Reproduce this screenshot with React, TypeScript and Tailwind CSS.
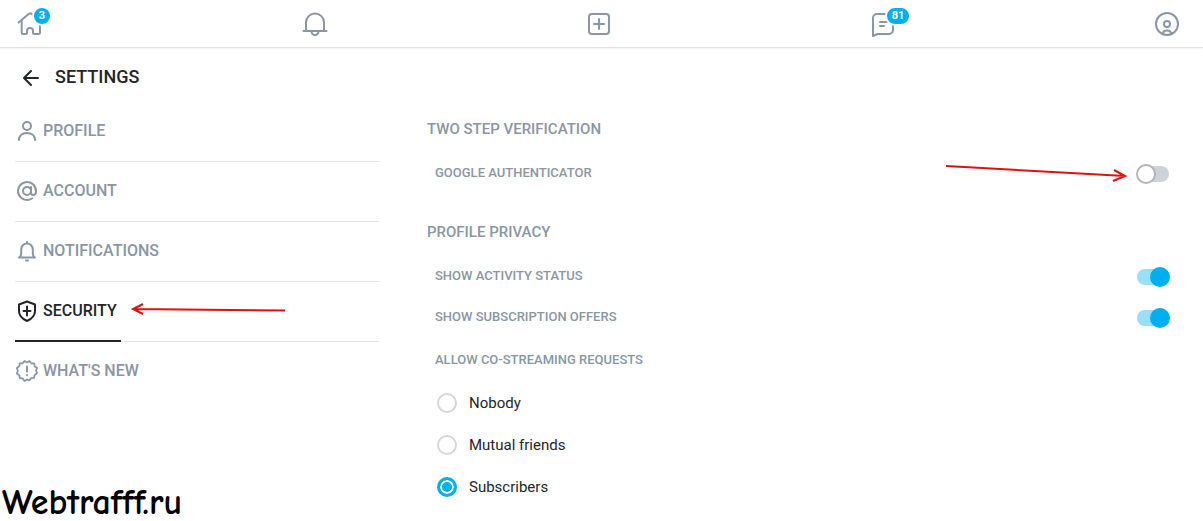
import { useState } from 'react';
import type { ReactNode } from 'react';

type IconProps = { children: ReactNode; size?: string };

function Icon({ children, size = 'size-6' }: IconProps) {
  const box = size === 'size-7' ? '0 0 28 28' : '0 0 24 24';
  return (
    <svg viewBox={box} className={`${size} shrink-0`} fill="none" stroke="currentColor" strokeWidth="2" strokeLinecap="round" strokeLinejoin="round" aria-hidden="true">
      {children}
    </svg>
  );
}

const menu = [
  {
    id: 'profile',
    label: 'PROFILE',
    icon: (
      <>
        <circle cx="12" cy="7" r="4" />
        <path d="M4 21c0-4.500 3.500-7 8-7s8 2.500 8 7" />
      </>
    ),
  },
  {
    id: 'account',
    label: 'ACCOUNT',
    icon: (
      <>
        <circle cx="12" cy="12" r="4" />
        <path d="M16 8v5.500a2.500 2.500 0 0 0 5 0V12a9 9 0 1 0-4 7.500" />
      </>
    ),
  },
  {
    id: 'notifications',
    label: 'NOTIFICATIONS',
    icon: (
      <>
        <path d="M4 18.500h16M5 18c1-1.200 1.200-2.500 1.200-4v-3.500a5.800 6 0 0 1 11.600 0V14c0 1.500.2 2.800 1.200 4M12 3v.5" />
        <path d="M11 21.500h2" />
      </>
    ),
  },
  {
    id: 'security',
    label: 'SECURITY',
    icon: (
      <>
        <path d="M12 2.500l8 3V12c0 5-3.500 8-8 10-4.500-2-8-5-8-10V5.500z" />
        <path d="M12 7.500v9M8.500 12h7" />
      </>
    ),
  },
  {
    id: 'whats-new',
    label: "WHAT'S NEW",
    icon: (
      <>
        <path strokeWidth="1.8" d="M12 3.500L14.500 2l1.700 2.300 2.900.1.500 2.800 2.400 1.600-.9 2.700.9 2.700-2.400 1.900-.5 2.800-2.900.2-1.900 2.200L12 20.500 9.500 22l-1.800-2.600-2.900-.2-.5-2.800-2.400-1.900.9-2.700-.9-2.900 2.400-1.700.5-2.800 2.900-.1L9.500 2z" />
        <path d="M12 7.500v5M12 16v.3" />
      </>
    ),
  },
];

const requestOptions = ['Nobody', 'Mutual friends', 'Subscribers'];

function TopBar() {
  return (
    <header className="flex h-12 items-center justify-between border-b border-[#dfe3e6] pr-[22px] pl-4 text-[#8a96a3] shadow-xs">
      <button type="button" aria-label="Home" className="relative">
        <Icon size="size-7">
          <path d="M2.500 12.500L13 3.800a2 2 0 0 1 2.500 0l9 8.700M5.700 11v11.500A1.500 1.500 0 0 0 7.200 24h2.300a1.500 1.500 0 0 0 1.500-1.500V21a3 3 0 0 1 6 0v1.500a1.500 1.500 0 0 0 1.500 1.500h4a1.500 1.500 0 0 0 1.500-1.500V12" />
        </Icon>
        <span className="absolute -top-1 left-4 flex h-5 min-w-5 items-center justify-center rounded-full border-2 border-white bg-[#00aff0] text-[11px] leading-4 font-bold text-white">3</span>
      </button>
      <button type="button" aria-label="Notifications">
        <Icon size="size-7">
          <path d="M3.500 21h23M6 21v-8.500a9 9 0 0 1 18 0V21" />
          <path d="M11.500 21.500a3.500 3.500 0 0 0 7 0" />
        </Icon>
      </button>
      <button type="button" aria-label="New post">
        <Icon size="size-7">
          <rect x="4" y="4" width="20" height="20" rx="3" />
          <path d="M14 9v10M9 14h10" />
        </Icon>
      </button>
      <button type="button" aria-label="Messages" className="relative">
        <Icon size="size-7">
          <path d="M4 26V8a4 4 0 0 1 4-4h16v16a4 4 0 0 1-4 4H8.500z" />
          <path d="M11 12h7M11 16h4" />
        </Icon>
        <span className="absolute -top-1 left-4 flex h-5 items-center justify-center rounded-full border-2 border-white bg-[#00aff0] px-[5px] text-[11px] leading-4 font-bold text-white">81</span>
      </button>
      <button type="button" aria-label="My profile">
        <Icon size="size-7">
          <circle cx="14" cy="14" r="11" />
          <circle cx="14" cy="14" r="3" />
          <path d="M10 23.500c0-4 8-4 8 0" />
        </Icon>
      </button>
    </header>
  );
}

type SwitchRowProps = {
  id: string;
  label: string;
  checked: boolean;
  onChange: (value: boolean) => void;
  children?: ReactNode;
};

function SwitchRow({ id, label, checked, onChange, children }: SwitchRowProps) {
  return (
    <div className="flex h-[41px] items-center pl-2">
      <label htmlFor={id} className="flex-1 pb-0.5 text-[13px] leading-5 font-medium">{label}</label>
      {children}
      <input
        id={id}
        type="checkbox"
        role="switch"
        checked={checked}
        onChange={(e) => onChange(e.target.checked)}
        className="flex h-4 w-8 shrink-0 appearance-none items-center rounded-full bg-[#ccd2d8] before:-ml-px before:size-5 before:shrink-0 before:rounded-full before:border-2 before:border-[#b0b4b8] before:bg-white checked:bg-[#99dff9] checked:before:ml-[13px] checked:before:border-[#00aff0] checked:before:bg-[#00aff0]"
      />
    </div>
  );
}

export default function App() {
  const [active, setActive] = useState('security');
  const [authenticator, setAuthenticator] = useState(false);
  const [activity, setActivity] = useState(true);
  const [offers, setOffers] = useState(true);
  const [requests, setRequests] = useState('Subscribers');

  return (
    <div className="relative min-h-screen bg-white font-['Roboto',sans-serif] text-[#242529]">
      <TopBar />

      <main className="pr-[34px] pl-[15px]">
        {/* Page title */}
        <div className="flex items-center gap-3 pt-[17px] pb-[13px] pl-1">
          <button type="button" aria-label="Back">
            <Icon>
              <path d="M19 13H5M12 6l-7 7 7 7" />
            </Icon>
          </button>
          <h1 className="text-lg leading-6 font-medium">SETTINGS</h1>
        </div>

        <div className="grid grid-cols-[364fr_742fr] gap-12">
          {/* Menu */}
          <nav aria-label="Settings">
            <ul>
              {menu.map((item) => (
                <li key={item.id} className="flex h-[60px] items-start border-b border-[#e3e6e9] last:border-0">
                  <a
                    href={`#${item.id}`}
                    onClick={() => setActive(item.id)}
                    className={`flex h-[60px] shrink-0 items-center gap-1 border-b-2 pr-1 font-medium ${active === item.id ? 'border-[#242529] text-[#242529]' : 'border-transparent text-[#8a96a3]'}`}
                  >
                    <Icon>{item.icon}</Icon>
                    {item.label}
                  </a>
                  {item.id === 'security' && (
                    <svg viewBox="0 0 156 14" className="mt-5 ml-[9px] h-3.5 w-[156px] shrink-0" fill="none" stroke="#e01010" strokeWidth="2" aria-hidden="true">
                      <path d="M155 8.500L3 7M13 2L3 7l10 5" />
                    </svg>
                  )}
                </li>
              ))}
            </ul>
          </nav>

          {/* Security settings */}
          <div className="pt-[15px] text-[#8a96a3]">
            <section>
              <h2 className="mb-3 text-[15px] leading-6 font-medium">TWO STEP VERIFICATION</h2>
              <SwitchRow id="authenticator" label="GOOGLE AUTHENTICATOR" checked={authenticator} onChange={setAuthenticator}>
                <svg viewBox="0 0 182 20" className="mr-2.5 h-5 w-[182px]" fill="none" stroke="#e01010" strokeWidth="2" aria-hidden="true">
                  <path d="M1 2l179 10M169 6l11 6-12 5" />
                </svg>
              </SwitchRow>
            </section>

            <section className="mt-[26px]">
              <h2 className="mb-3 text-[15px] leading-6 font-medium">PROFILE PRIVACY</h2>
              <SwitchRow id="activity" label="SHOW ACTIVITY STATUS" checked={activity} onChange={setActivity} />
              <SwitchRow id="offers" label="SHOW SUBSCRIPTION OFFERS" checked={offers} onChange={setOffers} />

              <fieldset className="pl-2">
                <legend className="text-[13px] leading-[44px] font-medium">ALLOW CO-STREAMING REQUESTS</legend>
                {requestOptions.map((option) => (
                  <label key={option} className="flex h-[42px] items-center gap-3 pl-0.5 text-[15px] text-[#242529]">
                    <input
                      type="radio"
                      name="requests"
                      value={option}
                      checked={requests === option}
                      onChange={() => setRequests(option)}
                      className="size-5 shrink-0 appearance-none rounded-full border-2 border-[#d4d6d9] bg-white checked:border-3 checked:border-[#00aff0] checked:bg-[#00aff0] checked:ring-2 checked:ring-white checked:ring-inset"
                    />
                    {option}
                  </label>
                ))}
              </fieldset>
            </section>
          </div>
        </div>
      </main>

      <p className="absolute bottom-0 left-0 pl-0.5 font-['Comic_Sans_MS','Comic_Neue','Lato',cursive] text-4xl leading-9 font-bold text-black [font-variant-ligatures:none]">Webtrafff.ru</p>
    </div>
  );
}
